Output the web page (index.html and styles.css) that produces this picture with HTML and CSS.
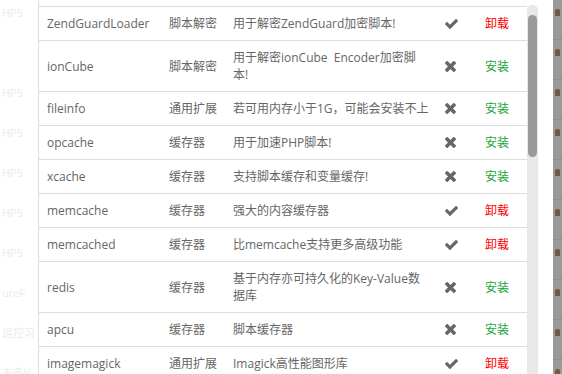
FILE: index.html
```html
<!DOCTYPE html>
<html lang="zh-CN">
<head>
<meta charset="utf-8">
<title>软件管理</title>
<link rel="stylesheet" href="styles.css">
</head>
<body>
<div class="page">
  <div class="bg-left">
    <div class="bg-label">HP5</div>
    <div class="bg-label"></div>
    <div class="bg-label">HP5</div>
    <div class="bg-label">HP5</div>
    <div class="bg-label">HP5</div>
    <div class="bg-label">HP5</div>
    <div class="bg-label">HP5</div>
    <div class="bg-label">ureF</div>
    <div class="bg-label">运控习</div>
    <div class="bg-label">去冬V</div>
  </div>

  <div class="panel">
    <table class="ext-table">
      <colgroup>
        <col class="c-name"><col class="c-type"><col class="c-desc"><col class="c-state"><col class="c-op">
      </colgroup>
      <tbody>
        <tr><td>ZendGuardLoader</td><td>脚本解密</td><td class="desc">用于解密ZendGuard加密脚本!</td><td class="st"><svg class="ic-check" viewBox="121 334 1550 1188"><path d="M1671 566q0 40-28 68l-724 724-136 136q-28 28-68 28t-68-28l-136-136-362-362q-28-28-28-68t28-68l136-136q28-28 68-28t68 28l294 295 656-657q28-28 68-28t68 28l136 136q28 28 28 68z"/></svg></td><td><a class="op-un">卸载</a></td></tr>
        <tr><td>ionCube</td><td>脚本解密</td><td class="desc">用于解密ionCube Encoder加密脚本!</td><td class="st"><svg class="ic-times" viewBox="110 366 1188 1188"><path d="M1298 1322q0 40-28 68l-136 136q-28 28-68 28t-68-28l-294-294-294 294q-28 28-68 28t-68-28l-136-136q-28-28-28-68t28-68l294-294-294-294q-28-28-28-68t28-68l136-136q28-28 68-28t68 28l294 294 294-294q28-28 68-28t68 28l136 136q28 28 28 68t-28 68l-294 294 294 294q28 28 28 68z"/></svg></td><td><a class="op-in">安装</a></td></tr>
        <tr><td>fileinfo</td><td>通用扩展</td><td class="desc">若可用内存小于1G，可能会安装不上</td><td class="st"><svg class="ic-times" viewBox="110 366 1188 1188"><path d="M1298 1322q0 40-28 68l-136 136q-28 28-68 28t-68-28l-294-294-294 294q-28 28-68 28t-68-28l-136-136q-28-28-28-68t28-68l294-294-294-294q-28-28-28-68t28-68l136-136q28-28 68-28t68 28l294 294 294-294q28-28 68-28t68 28l136 136q28 28 28 68t-28 68l-294 294 294 294q28 28 28 68z"/></svg></td><td><a class="op-in">安装</a></td></tr>
        <tr><td>opcache</td><td>缓存器</td><td class="desc">用于加速PHP脚本!</td><td class="st"><svg class="ic-times" viewBox="110 366 1188 1188"><path d="M1298 1322q0 40-28 68l-136 136q-28 28-68 28t-68-28l-294-294-294 294q-28 28-68 28t-68-28l-136-136q-28-28-28-68t28-68l294-294-294-294q-28-28-28-68t28-68l136-136q28-28 68-28t68 28l294 294 294-294q28-28 68-28t68 28l136 136q28 28 28 68t-28 68l-294 294 294 294q28 28 28 68z"/></svg></td><td><a class="op-in">安装</a></td></tr>
        <tr><td>xcache</td><td>缓存器</td><td class="desc">支持脚本缓存和变量缓存!</td><td class="st"><svg class="ic-times" viewBox="110 366 1188 1188"><path d="M1298 1322q0 40-28 68l-136 136q-28 28-68 28t-68-28l-294-294-294 294q-28 28-68 28t-68-28l-136-136q-28-28-28-68t28-68l294-294-294-294q-28-28-28-68t28-68l136-136q28-28 68-28t68 28l294 294 294-294q28-28 68-28t68 28l136 136q28 28 28 68t-28 68l-294 294 294 294q28 28 28 68z"/></svg></td><td><a class="op-in">安装</a></td></tr>
        <tr><td>memcache</td><td>缓存器</td><td class="desc">强大的内容缓存器</td><td class="st"><svg class="ic-check" viewBox="121 334 1550 1188"><path d="M1671 566q0 40-28 68l-724 724-136 136q-28 28-68 28t-68-28l-136-136-362-362q-28-28-28-68t28-68l136-136q28-28 68-28t68 28l294 295 656-657q28-28 68-28t68 28l136 136q28 28 28 68z"/></svg></td><td><a class="op-un">卸载</a></td></tr>
        <tr><td>memcached</td><td>缓存器</td><td class="desc">比memcache支持更多高级功能</td><td class="st"><svg class="ic-check" viewBox="121 334 1550 1188"><path d="M1671 566q0 40-28 68l-724 724-136 136q-28 28-68 28t-68-28l-136-136-362-362q-28-28-28-68t28-68l136-136q28-28 68-28t68 28l294 295 656-657q28-28 68-28t68 28l136 136q28 28 28 68z"/></svg></td><td><a class="op-un">卸载</a></td></tr>
        <tr><td>redis</td><td>缓存器</td><td class="desc">基于内存亦可持久化的Key-Value数据库</td><td class="st"><svg class="ic-times" viewBox="110 366 1188 1188"><path d="M1298 1322q0 40-28 68l-136 136q-28 28-68 28t-68-28l-294-294-294 294q-28 28-68 28t-68-28l-136-136q-28-28-28-68t28-68l294-294-294-294q-28-28-28-68t28-68l136-136q28-28 68-28t68 28l294 294 294-294q28-28 68-28t68 28l136 136q28 28 28 68t-28 68l-294 294 294 294q28 28 28 68z"/></svg></td><td><a class="op-in">安装</a></td></tr>
        <tr><td>apcu</td><td>缓存器</td><td class="desc">脚本缓存器</td><td class="st"><svg class="ic-times" viewBox="110 366 1188 1188"><path d="M1298 1322q0 40-28 68l-136 136q-28 28-68 28t-68-28l-294-294-294 294q-28 28-68 28t-68-28l-136-136q-28-28-28-68t28-68l294-294-294-294q-28-28-28-68t28-68l136-136q28-28 68-28t68 28l294 294 294-294q28-28 68-28t68 28l136 136q28 28 28 68t-28 68l-294 294 294 294q28 28 28 68z"/></svg></td><td><a class="op-in">安装</a></td></tr>
        <tr><td>imagemagick</td><td>通用扩展</td><td class="desc">Imagick高性能图形库</td><td class="st"><svg class="ic-check" viewBox="121 334 1550 1188"><path d="M1671 566q0 40-28 68l-724 724-136 136q-28 28-68 28t-68-28l-136-136-362-362q-28-28-28-68t28-68l136-136q28-28 68-28t68 28l294 295 656-657q28-28 68-28t68 28l136 136q28 28 28 68z"/></svg></td><td><a class="op-un">卸载</a></td></tr>
      </tbody>
    </table>
  </div>

  <div class="scrollbar"><div class="thumb"></div></div>

  <div class="gap"></div>

  <div class="bg-right">
    <div class="bg-row"><span class="dot"></span></div>
    <div class="bg-row"><span class="dot"></span></div>
    <div class="bg-row"><span class="dot"></span></div>
    <div class="bg-row"><span class="dot"></span></div>
    <div class="bg-row"><span class="dot"></span></div>
    <div class="bg-row"><span class="dot"></span></div>
    <div class="bg-row"><span class="dot"></span></div>
    <div class="bg-row"><span class="dot"></span></div>
    <div class="bg-row"><span class="dot"></span></div>
    <div class="bg-row"><span class="dot"></span></div>
  </div>
</div>
</body>
</html>
```

FILE: styles.css
```css
html, body {
  margin: 0;
  padding: 0;
  background: #fff;
}

body {
  font-family: "Open Sans", "Noto Sans CJK SC", sans-serif;
  font-size: 12px;
  color: #666;
}

.page {
  display: flex;
  height: 374px;
  overflow: hidden;
}

/* faint background page on the left */
.bg-left {
  width: 38px;
  flex: none;
  display: flex;
  flex-direction: column;
}

.bg-label {
  height: 40px;
  line-height: 26px;
  white-space: nowrap;
  padding-left: 2px;
  font-size: 11px;
  color: #ebebeb;
  flex: none;
}

/* main table panel */
.panel {
  width: 488px;
  flex: none;
  border-left: 1px solid #ddd;
  padding-top: 6px;
}

.ext-table {
  width: 488px;
  table-layout: fixed;
  border-collapse: separate;
  border-spacing: 0;
}

.c-name { width: 122px; }
.c-type { width: 64px; }
.c-desc { width: 212px; }
.c-state { width: 40px; }
.c-op { width: 50px; }

.ext-table td {
  border-top: 1px solid #ddd;
  padding: 8px;
  line-height: 17px;
  vertical-align: middle;
  color: #666;
}

.ext-table td.desc {
  word-spacing: 3px;
}

.ext-table td.st {
  line-height: 0;
}

.ic-check {
  width: 13px;
  height: 10px;
  fill: #666;
}

.ic-times {
  width: 11px;
  height: 11px;
  fill: #666;
}

.op-un {
  color: #f00;
}

.op-in {
  color: #20a53a;
}

/* scrollbar drawn beside the panel */
.scrollbar {
  width: 11px;
  flex: none;
  margin-top: 5px;
  background: #e8e8e8;
  border-radius: 5px 5px 0 0;
  padding: 10px 1px 0 1px;
  box-sizing: border-box;
}

.thumb {
  height: 142px;
  background: #9a9a9a;
  border-radius: 5px;
}

.gap {
  width: 15px;
  flex: none;
}

/* dimmed background page on the right */
.bg-right {
  flex: 1;
  background: #999;
  display: flex;
  flex-direction: column;
}

.bg-row {
  height: 40px;
  flex: none;
  box-sizing: border-box;
  border-bottom: 1px solid #8c8c8c;
  padding: 9px 0 0 2px;
}

.dot {
  display: block;
  width: 5px;
  height: 7px;
  background: #6e5a44;
  border-radius: 2px 2px 0 0;
}
```
